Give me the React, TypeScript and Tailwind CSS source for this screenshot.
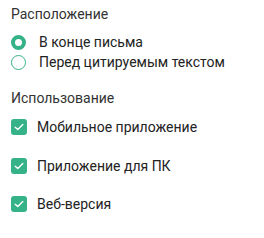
import { useState } from "react";

const USAGE = ["Мобильное приложение", "Приложение для ПК", "Веб-версия"];

function Radio({ checked }: { checked: boolean }) {
    return (
        <span
            className={`w-[15px] h-[15px] rounded-full shrink-0 bg-white ${checked ? "border-[4px] border-[#35b287]" : "border border-[#35b287]"}`}
        />
    );
}

function Check() {
    return (
        <span className="w-4 h-4 rounded-[3px] bg-[#35b287] flex items-center justify-center shrink-0">
            <svg width="12" height="12" viewBox="0 0 12 12" fill="none">
                <path d="M2.2 6.2 4.8 8.6 9.8 3.6" stroke="white" strokeWidth="1.4" strokeLinecap="round" strokeLinejoin="round" />
            </svg>
        </span>
    );
}

export default function App() {
    const [place, setPlace] = useState(0);

    return (
        <div className="w-[264px] h-[238px] bg-white pl-[11px] pt-1 text-[14px] leading-5 text-[#222]" style={{ fontFamily: "Roboto, 'Liberation Sans', sans-serif" }}>
            {/* Расположение */}
            <div className="text-[#333]">Расположение</div>
            <div className="mt-[8px] flex flex-col">
                {["В конце письма", "Перед цитируемым текстом"].map((t, i) => (
                    <label key={t} onClick={() => setPlace(i)} className="flex items-center gap-[13px] h-5 cursor-pointer">
                        <Radio checked={place === i} />
                        <span>{t}</span>
                    </label>
                ))}
            </div>

            {/* Использование */}
            <div className="mt-4 text-[#333]">Использование</div>
            <div className="mt-[9px] flex flex-col gap-[18.5px]">
                {USAGE.map((t) => (
                    <label key={t} className="flex items-center gap-[10px] h-5">
                        <Check />
                        <span>{t}</span>
                    </label>
                ))}
            </div>
        </div>
    );
}
